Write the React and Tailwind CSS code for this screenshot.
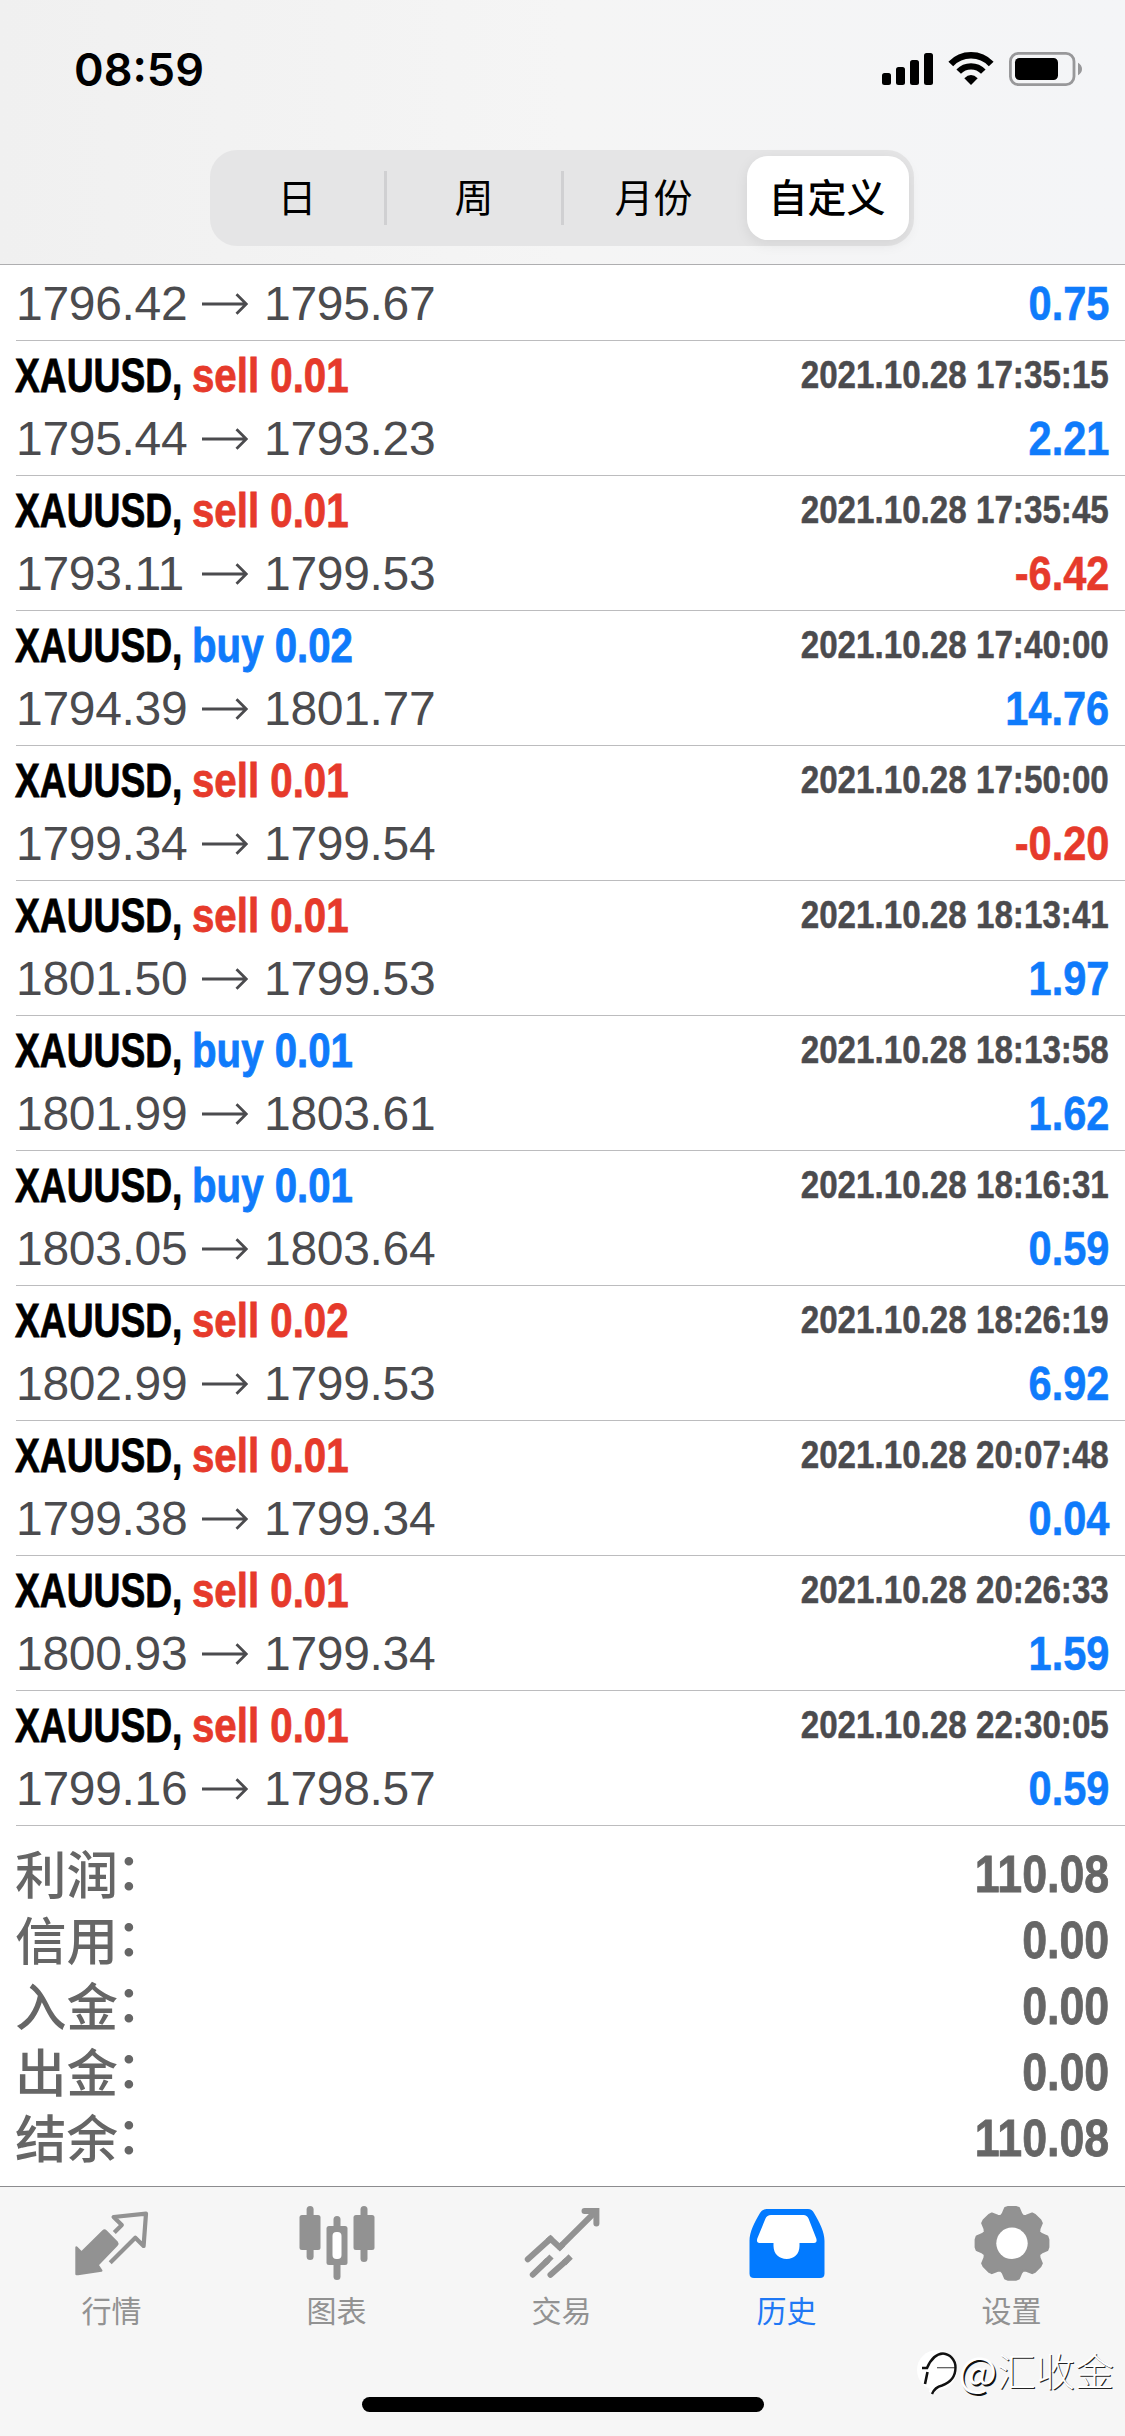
import clsx from 'clsx';

const periods = ['日', '周', '月份', '自定义'];

const deals = [
  { side: 'sell', volume: '0.01', time: '2021.10.28 17:35:15', open: '1795.44', close: '1793.23', profit: '2.21' },
  { side: 'sell', volume: '0.01', time: '2021.10.28 17:35:45', open: '1793.11', close: '1799.53', profit: '-6.42' },
  { side: 'buy', volume: '0.02', time: '2021.10.28 17:40:00', open: '1794.39', close: '1801.77', profit: '14.76' },
  { side: 'sell', volume: '0.01', time: '2021.10.28 17:50:00', open: '1799.34', close: '1799.54', profit: '-0.20' },
  { side: 'sell', volume: '0.01', time: '2021.10.28 18:13:41', open: '1801.50', close: '1799.53', profit: '1.97' },
  { side: 'buy', volume: '0.01', time: '2021.10.28 18:13:58', open: '1801.99', close: '1803.61', profit: '1.62' },
  { side: 'buy', volume: '0.01', time: '2021.10.28 18:16:31', open: '1803.05', close: '1803.64', profit: '0.59' },
  { side: 'sell', volume: '0.02', time: '2021.10.28 18:26:19', open: '1802.99', close: '1799.53', profit: '6.92' },
  { side: 'sell', volume: '0.01', time: '2021.10.28 20:07:48', open: '1799.38', close: '1799.34', profit: '0.04' },
  { side: 'sell', volume: '0.01', time: '2021.10.28 20:26:33', open: '1800.93', close: '1799.34', profit: '1.59' },
  { side: 'sell', volume: '0.01', time: '2021.10.28 22:30:05', open: '1799.16', close: '1798.57', profit: '0.59' },
];

const summary = [
  { label: '利润', value: '110.08' },
  { label: '信用', value: '0.00' },
  { label: '入金', value: '0.00' },
  { label: '出金', value: '0.00' },
  { label: '结余', value: '110.08' },
];

function StatusIcons() {
  return (
    <svg width="204" height="38" viewBox="0 0 204 38" fill="none">
      <g fill="#000">
        <rect x="2" y="23" width="9" height="12" rx="2.5" />
        <rect x="16" y="17" width="9" height="18" rx="2.5" />
        <rect x="30" y="10" width="9" height="25" rx="2.5" />
        <rect x="44" y="3" width="9" height="32" rx="2.5" />
        <path d="M91 35 84.3 28.3Q91 21.8 97.7 28.3Z" />
        <rect x="135" y="8" width="43" height="22" rx="4.5" />
      </g>
      <path d="M70.8 14A27.8 27.8 0 0 1 111.2 14" stroke="#000" strokeWidth="6.6" />
      <path d="M78.7 21.7A16.7 16.7 0 0 1 103.3 21.7" stroke="#000" strokeWidth="6.2" />
      <rect x="130.4" y="3.4" width="63.6" height="31.2" rx="8" stroke="#98989a" strokeWidth="2.8" />
      <path d="M198 12.7Q202 15 202 19T198 25.3Z" fill="#98989a" />
    </svg>
  );
}

function QuotesIcon() {
  return (
    <svg width="76" height="76" viewBox="0 0 76 76" className="overflow-visible">
      <path
        d="M1.5 69 1.5 42.5 6.5 47.5 28.3 26.2Q29.5 25 30.7 26.2L41.8 37.3Q42.8 38.6 41.8 39.8L22.5 60 26.3 65.6 3 69Z"
        fill="#929292" stroke="#929292" strokeWidth="2.4" strokeLinejoin="round"
      />
      <path
        d="M39.3 27.5 46.8 20 38.6 12 71 8.7 68.6 41 60.3 32.7 35.2 57.8"
        fill="none" stroke="#929292" strokeWidth="4.2" strokeLinejoin="round"
      />
    </svg>
  );
}

function ChartIcon() {
  return (
    <svg width="76" height="76" viewBox="0 0 76 76" fill="#929292" className="overflow-visible">
      <rect x="-.5" y="10" width="21" height="35" rx="2.5" />
      <rect x="6.6" y="1" width="7" height="54" rx="3.5" />
      <rect x="26.5" y="21" width="21" height="39" rx="2.5" />
      <rect x="33.5" y="11" width="7" height="64" rx="3.5" />
      <rect x="32.5" y="27" width="9" height="27" rx="4" fill="#fff" />
      <rect x="53.5" y="10" width="21" height="35" rx="2.5" />
      <rect x="60.5" y="1" width="7" height="56" rx="3.5" />
    </svg>
  );
}

function TradeIcon() {
  return (
    <svg width="76" height="76" viewBox="0 0 76 76" fill="none" stroke="#929292" strokeWidth="6" className="overflow-visible">
      <path d="M34.8 42.2 70.5 6.7M25.5 33.8 2.8 54.2" strokeLinecap="round" />
      <path d="M22.8 36.3 25.5 33.8 34.8 42.4 38 39.2" />
      <path d="M59.5 6.1H71.4V18.6" strokeLinecap="round" />
      <path d="M7.8 69.7 22 56M25.5 69.7 41 56" strokeLinecap="round" />
      <path d="M20 58 26.5 51.5M39 58 45.7 51.5" />
    </svg>
  );
}

function HistoryIcon() {
  return (
    <svg width="76" height="76" viewBox="0 0 76 76" className="overflow-visible">
      <path
        d="M16.5 4H58Q62 4 64 8C69.500 17 74.500 27 74.500 36V68.500Q74.500 73 70 73H4Q-.500 73-.500 68.500V36C-.500 27 4.500 17 10 8Q12.500 4 16.500 4Z"
        fill="#027aff"
      />
      <path
        d="M21 10H53.500Q57 10 58.500 13.500L66.300 33.500Q67.500 38 64 38H49.500V41C49.500 49 44 54 36.700 54S23.500 49 23.500 41V38H9.500Q6 38 7.300 33.500L15.500 13.500Q17 10 21 10Z"
        fill="#fff"
      />
    </svg>
  );
}

// 八齿齿轮轮廓
const toothShape = [[-22.5, 29.5], [-17.5, 31], [-11, 36], [-6, 36.6], [6, 36.6], [11, 36], [17.5, 31]];
const gearPoints = Array.from({ length: 8 }, (_, i) =>
  toothShape.map(([deg, r]) => {
    const a = ((deg + i * 45) * Math.PI) / 180;
    return `${(37 + r * Math.sin(a)).toFixed(2)},${(38.3 - r * Math.cos(a)).toFixed(2)}`;
  }).join(' ')
).join(' ');

function SettingsIcon() {
  return (
    <svg width="76" height="76" viewBox="0 0 76 76" className="overflow-visible">
      <polygon points={gearPoints} fill="#929292" stroke="#929292" strokeWidth="2" strokeLinejoin="round" />
      <circle cx="37" cy="38.3" r="15.7" fill="#fff" />
    </svg>
  );
}

const tabs = [
  { label: '行情', Icon: QuotesIcon },
  { label: '图表', Icon: ChartIcon },
  { label: '交易', Icon: TradeIcon },
  { label: '历史', Icon: HistoryIcon, active: true },
  { label: '设置', Icon: SettingsIcon },
];

function PriceLine({ open, close, profit }) {
  return (
    <div className="flex h-[60px] items-center justify-between pr-4">
      <div className="flex items-center text-[48px] leading-[60px] tracking-[-0.3px] text-[#4b4b4e]">
        <span className="w-[186px]">{open}</span>
        <svg width="46" height="22" viewBox="0 0 46 22" fill="none" stroke="#4b4b4e" strokeWidth="2.8">
          <path d="M0 11H44M34.500 1.200 44.300 11 34.500 20.800" />
        </svg>
        <span className="ml-4">{close}</span>
      </div>
      <span
        className={clsx(
          'origin-right scale-x-[0.865] text-[48px] leading-[60px] font-bold [-webkit-text-stroke:0.6px_currentColor]',
          profit.startsWith('-') ? 'text-[#e63a2b]' : 'text-[#0f7bfb]'
        )}
      >
        {profit}
      </span>
    </div>
  );
}

function DealRow({ deal }) {
  return (
    <div className="ml-4 h-[135px] border-b border-[#bcbcbe] pt-1">
      <div className="mb-1 flex h-[60px] items-center justify-between pr-4 font-bold whitespace-nowrap">
        <div className="mt-px -ml-px flex text-[48px] leading-[60px] [-webkit-text-stroke:0.8px_currentColor]">
          <span className="w-[177px] origin-left scale-x-[0.775] text-black">XAUUSD,</span>
          <span
            className={clsx(
              'origin-left scale-x-[0.838]',
              deal.side === 'sell' ? 'text-[#e63a2b]' : 'text-[#0f7bfb]'
            )}
          >
            {deal.side} {deal.volume}
          </span>
        </div>
        <span className="-mt-0.5 origin-right scale-x-[0.84] text-[39.5px] leading-[60px] text-[#4b4b4e] [-webkit-text-stroke:0.5px_currentColor]">
          {deal.time}
        </span>
      </div>
      <PriceLine open={deal.open} close={deal.close} profit={deal.profit} />
    </div>
  );
}

export default function App() {
  return (
    <div className="relative flex h-[2436px] w-[1125px] flex-col overflow-hidden bg-white font-['Liberation_Sans','Noto_Sans_CJK_SC',sans-serif]">
      {/* 顶部 */}
      <header className="h-[265px] border-b border-[#aeaeb0] bg-linear-to-r from-[#f0f0f0] via-[#f5f5f5] to-[#f4f5f7]">
        <div className="flex h-[150px] items-start justify-between pt-[51px] pr-[41px] pl-[74px]">
          <span className="font-['Inter',sans-serif] text-[45px] leading-[38px] font-semibold text-black">08:59</span>
          <div className="-mt-px">
            <StatusIcons />
          </div>
        </div>
        <div className="ml-[210px] flex h-24 w-[704px] items-center rounded-[27px] bg-[#e5e5e6] pr-[5px] text-[39px] text-black">
          {periods.map((name, i) => (
            <div
              key={name}
              className={clsx(
                'flex items-center justify-center',
                i < 2 && 'h-[54px] w-[177px] border-r-[3px] border-[#d0d0d2] pt-0.5',
                i === 2 && 'h-[54px] w-[183px] pt-0.5 pr-1',
                i === 3 && 'h-[84px] w-[162px] rounded-[21px] bg-white pt-0.5 pr-0.5 font-medium shadow-[0_4px_14px_rgba(0,0,0,0.08)]'
              )}
            >
              {name}
            </div>
          ))}
        </div>
      </header>

      {/* 历史成交 */}
      <main className="flex-1">
        <div className="ml-4 h-[76px] border-b border-[#bcbcbe] pt-[9px]">
          <PriceLine open="1796.42" close="1795.67" profit="0.75" />
        </div>
        {deals.map((deal) => (
          <DealRow key={deal.time} deal={deal} />
        ))}

        {/* 汇总 */}
        <div className="pt-[15px] pr-4 pl-[15px] text-[#666]">
          {summary.map((item) => (
            <div key={item.label} className="flex h-[66px] items-center justify-between">
              <span className="flex pt-1 text-[51.5px] leading-[60px] font-medium">
                {item.label}
                <span className="-mt-1 -ml-0.5">：</span>
              </span>
              <span className="origin-right scale-x-[0.86] text-[52px] leading-[66px] font-bold [-webkit-text-stroke:0.8px_currentColor]">
                {item.value}
              </span>
            </div>
          ))}
        </div>
      </main>

      {/* 底部导航 */}
      <nav className="flex h-[250px] flex-col border-t border-[#8c8c8f] bg-[#f6f6f6]">
        <div className="grid h-[210px] grid-cols-5">
          {tabs.map(({ label, Icon, active }) => (
            <div
              key={label}
              className={clsx('flex flex-col items-center pt-[18px]', active ? 'text-[#1f78f5]' : 'text-[#929292]')}
            >
              <Icon />
              <span className="mt-[13px] pr-0.5 text-[30px] leading-9">{label}</span>
            </div>
          ))}
        </div>
        <div className="h-[15px] w-[402px] self-center rounded-full bg-black" />
      </nav>

      {/* 水印 */}
      <div className="absolute right-[11px] bottom-[36px] flex items-center font-['Noto_Sans_CJK_SC',sans-serif] leading-[46px] text-white">
        <svg width="46" height="46" viewBox="0 0 46 46" fill="none">
          <circle cx="21" cy="20" r="20" fill="#fff" />
          <path d="M13 42Q14 30 27 33L18 44Z" fill="#fff" />
          <path d="M6 18H11Q17 4 27 3.500M11.500 22 9 34" stroke="#111" strokeWidth="2.6" />
          <path d="M21 17.700H39" stroke="#555" strokeWidth="1.2" />
          <path d="M27 3.500C34 4 39.500 10 39.500 17.500C39.500 28 33 33 26 35.500Q19 37 16 44" stroke="#111" strokeWidth="2.4" />
        </svg>
        <span className="-ml-1 mb-2 text-[41px] font-normal [text-shadow:1.5px_1.5px_0_#111]">@</span>
        <span className="mb-2 text-[39px] font-light [text-shadow:1px_1px_0_#222]">汇收金</span>
      </div>
    </div>
  );
}
